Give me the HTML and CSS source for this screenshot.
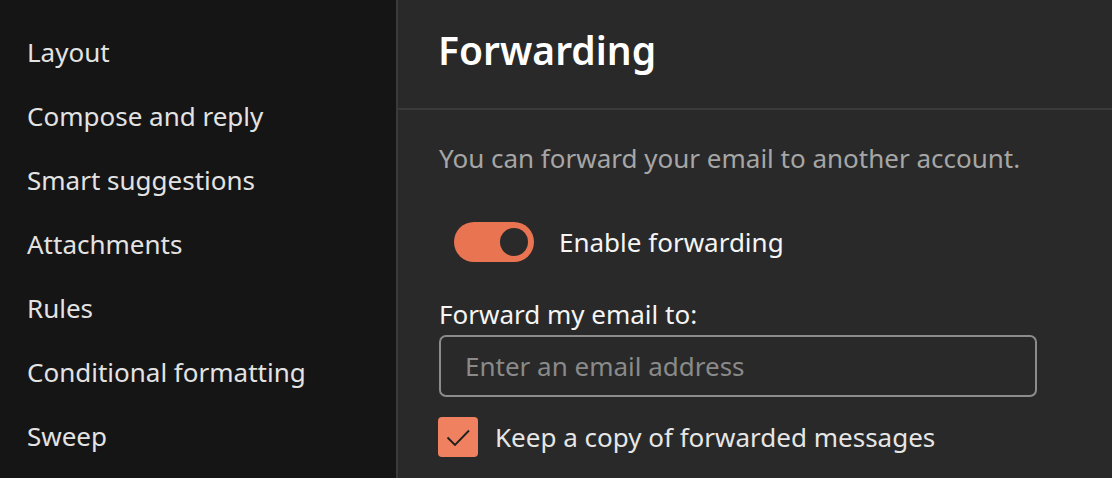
FILE: index.html
```html
<!DOCTYPE html>
<html lang="en">
<head>
    <meta charset="UTF-8">
    <meta name="viewport" content="width=device-width, initial-scale=1.0">
    <title>Mail settings - Forwarding</title>
    <link rel="stylesheet" href="styles.css">
</head>
<body>

    <nav class="sidebar">
        <div class="nav-item">Layout</div>
        <div class="nav-item">Compose and reply</div>
        <div class="nav-item">Smart suggestions</div>
        <div class="nav-item">Attachments</div>
        <div class="nav-item">Rules</div>
        <div class="nav-item">Conditional formatting</div>
        <div class="nav-item">Sweep</div>
    </nav>

    <main class="panel">
        <div class="panel-header">
            <h1>Forwarding</h1>
        </div>

        <div class="panel-body">
            <p class="hint">You can forward your email to another account.</p>

            <div class="toggle-row">
                <span class="toggle"><span class="knob"></span></span>
                <span class="toggle-label">Enable forwarding</span>
            </div>

            <label class="field-label" for="forwardTo">Forward my email to:</label>
            <input type="text" id="forwardTo" class="email-input" placeholder="Enter an email address">

            <div class="check-row">
                <span class="checkbox">
                    <svg width="40" height="40" viewBox="0 0 40 40">
                        <path d="M9.5 20.5 L17 28 L31 13.5" fill="none" stroke="#1e1e1e" stroke-width="1.8"/>
                    </svg>
                </span>
                <span class="check-label">Keep a copy of forwarded messages</span>
            </div>
        </div>
    </main>

</body>
</html>
```

FILE: styles.css
```css
body {
    margin: 0;
    font-family: "Noto Sans", "Open Sans", sans-serif;
    background: #292929;
    color: #f2f2f2;
    display: flex;
    height: 478px;
    overflow: hidden;
}

.sidebar {
    width: 398px;
    flex-shrink: 0;
    background: #151515;
    border-right: 2px solid #3a3a3a;
    padding-top: 20px;
    box-sizing: border-box;
}

.nav-item {
    height: 64px;
    line-height: 64px;
    padding-left: 27px;
    font-size: 26px;
    color: #e3e3e3;
}

.panel {
    flex: 1;
    display: flex;
    flex-direction: column;
}

.panel-header {
    height: 108px;
    border-bottom: 2px solid #3a3a3a;
    padding-left: 40px;
    display: flex;
    align-items: center;
}

.panel-header h1 {
    margin: 0 0 10px 0;
    font-size: 39px;
    font-weight: 600;
    color: #ffffff;
}

.panel-body {
    padding-left: 41px;
}

.hint {
    margin: 30px 0 0 0;
    font-size: 26px;
    line-height: 36px;
    color: #a6a6a6;
}

.toggle-row {
    display: flex;
    align-items: center;
    margin-top: 46px;
    padding-left: 15px;
    height: 40px;
}

.toggle {
    width: 80px;
    height: 40px;
    border-radius: 20px;
    background: #e97451;
    position: relative;
    flex-shrink: 0;
}

.knob {
    position: absolute;
    right: 6px;
    top: 6px;
    width: 28px;
    height: 28px;
    border-radius: 50%;
    background: #2a2a2a;
}

.toggle-label {
    margin-left: 25px;
    font-size: 26px;
    color: #f5f5f5;
}

.field-label {
    display: block;
    margin-top: 35px;
    font-size: 26px;
    line-height: 34px;
    color: #f5f5f5;
}

.email-input {
    display: block;
    margin-top: 4px;
    width: 598px;
    height: 62px;
    box-sizing: border-box;
    background: transparent;
    border: 2px solid #8c8c8c;
    border-radius: 7px;
    padding: 0 24px;
    font-family: inherit;
    font-size: 26px;
    color: #f5f5f5;
}

.email-input::placeholder {
    color: #8a8a8a;
}

.check-row {
    display: flex;
    align-items: center;
    margin-top: 20px;
    margin-left: -1px;
}

.checkbox {
    width: 40px;
    height: 40px;
    border-radius: 4px;
    background: #ef8160;
    display: flex;
    align-items: center;
    justify-content: center;
    flex-shrink: 0;
}

.check-label {
    margin-left: 17px;
    font-size: 26px;
    color: #e6e6e6;
}
```
